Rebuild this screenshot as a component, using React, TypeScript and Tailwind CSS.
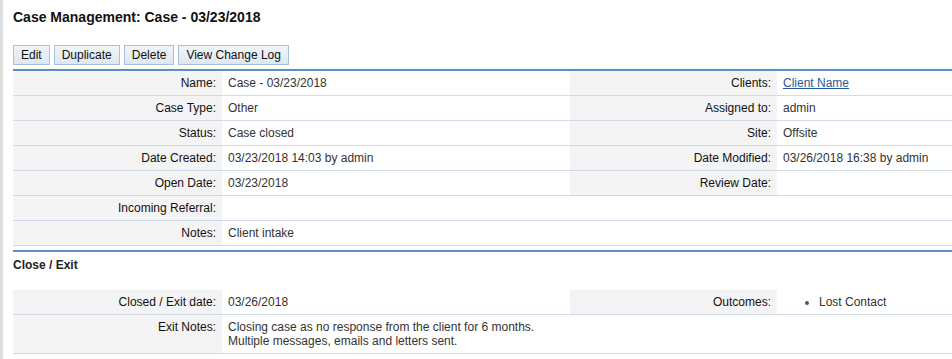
const labelCell =
  "bg-[#f4f4f4] text-right text-[#111] px-[6px] py-[5px] align-top whitespace-nowrap";
const valueCell = "px-[6px] py-[5px] align-top text-[#333]";

type Pair = { label: string; value?: React.ReactNode };

function Row({ left, right }: { left: Pair; right?: Pair }) {
  return (
    <tr className="border-b border-[#cfdce8]">
      <td className={labelCell}>{left.label}</td>
      {right ? (
        <>
          <td className={valueCell}>{left.value}</td>
          <td className={labelCell}>{right.label}</td>
          <td className={valueCell}>{right.value}</td>
        </>
      ) : (
        <td className={valueCell} colSpan={3}>
          {left.value}
        </td>
      )}
    </tr>
  );
}

function Cols() {
  return (
    <colgroup>
      <col className="w-[209px]" />
      <col className="w-[348px]" />
      <col className="w-[207px]" />
      <col />
    </colgroup>
  );
}

function Btn({ children }: { children: React.ReactNode }) {
  return (
    <button className="h-[20px] px-[7px] border border-[#a9c1d8] bg-gradient-to-b from-[#f1f5f9] to-[#dde7f0] text-[12px] leading-[18px] text-[#111]">
      {children}
    </button>
  );
}

export default function App() {
  return (
    <div className="flex min-h-screen bg-white font-['Liberation_Sans',Arial,sans-serif] text-[12px] leading-[14px]">
      <div className="w-[3px] shrink-0 bg-[#dedede]" />
      <div className="flex-1 pl-[10px]">
        <h1 className="pt-[9px] text-[14px] leading-[17px] font-bold text-[#111]">
          Case Management: Case - 03/23/2018
        </h1>
        <div className="mt-[19px] flex gap-[4px]">
          <Btn>Edit</Btn>
          <Btn>Duplicate</Btn>
          <Btn>Delete</Btn>
          <Btn>View Change Log</Btn>
        </div>
        <div className="mt-[4px] border-t-2 border-[#5a90c8]">
          <table className="w-full table-fixed border-collapse">
            <Cols />
            <tbody>
              <Row
                left={{ label: "Name:", value: "Case - 03/23/2018" }}
                right={{
                  label: "Clients:",
                  value: (
                    <a href="#" className="text-[#1f5b99] underline">
                      Client Name
                    </a>
                  ),
                }}
              />
              <Row
                left={{ label: "Case Type:", value: "Other" }}
                right={{ label: "Assigned to:", value: "admin" }}
              />
              <Row
                left={{ label: "Status:", value: "Case closed" }}
                right={{ label: "Site:", value: "Offsite" }}
              />
              <Row
                left={{ label: "Date Created:", value: "03/23/2018 14:03 by admin" }}
                right={{ label: "Date Modified:", value: "03/26/2018 16:38 by admin" }}
              />
              <Row
                left={{ label: "Open Date:", value: "03/23/2018" }}
                right={{ label: "Review Date:", value: "" }}
              />
              <Row left={{ label: "Incoming Referral:", value: "" }} />
              <Row left={{ label: "Notes:", value: "Client intake" }} />
            </tbody>
          </table>
        </div>
        <div className="mt-[4px] border-t-2 border-[#5a90c8]">
          <h2 className="pt-[6px] font-bold text-[#222]">Close / Exit</h2>
          <table className="mt-[18px] w-full table-fixed border-collapse">
            <Cols />
            <tbody>
              <Row
                left={{ label: "Closed / Exit date:", value: "03/26/2018" }}
                right={{
                  label: "Outcomes:",
                  value: (
                    <ul className="list-disc pl-[36px] marker:text-[#555]">
                      <li>Lost Contact</li>
                    </ul>
                  ),
                }}
              />
              <Row
                left={{
                  label: "Exit Notes:",
                  value: (
                    <>
                      Closing case as no response from the client for 6 months.
                      <br />
                      Multiple messages, emails and letters sent.
                    </>
                  ),
                }}
              />
            </tbody>
          </table>
        </div>
      </div>
    </div>
  );
}
